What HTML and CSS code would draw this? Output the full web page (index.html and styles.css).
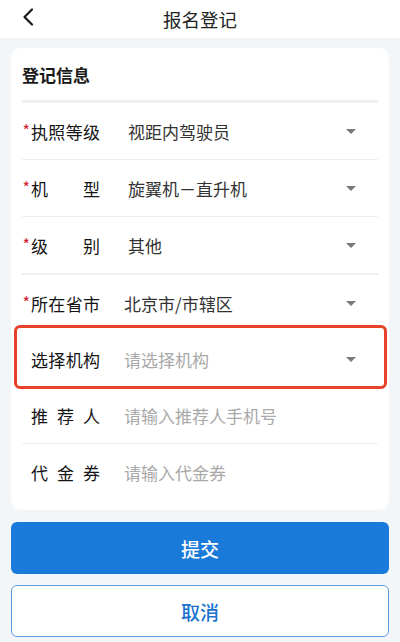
FILE: index.html
```html
<!DOCTYPE html>
<html lang="zh-CN">
<head>
<meta charset="utf-8">
<title>报名登记</title>
<link rel="stylesheet" href="styles.css">
</head>
<body>
<header class="topbar">
  <svg class="back" width="12" height="18" viewBox="0 0 12 18"><path d="M10 1.5 L2.5 9 L10 16.5" fill="none" stroke="#1a1a1a" stroke-width="2.2" stroke-linecap="round" stroke-linejoin="round"/></svg>
  <h1 class="title">报名登记</h1>
</header>
<main class="page">
  <section class="card">
    <h2 class="card-title">登记信息</h2>
    <div class="thick"></div>
    <div class="row line">
      <span class="star">*</span>
      <span class="label"><i>执</i><i>照</i><i>等</i><i>级</i></span>
      <span class="value v4">视距内驾驶员</span>
      <span class="caret"></span>
    </div>
    <div class="row line">
      <span class="star">*</span>
      <span class="label"><i>机</i><i>型</i></span>
      <span class="value v4">旋翼机－直升机</span>
      <span class="caret"></span>
    </div>
    <div class="row">
      <span class="star">*</span>
      <span class="label"><i>级</i><i>别</i></span>
      <span class="value v4">其他</span>
      <span class="caret"></span>
    </div>
    <div class="thick thin2"></div>
    <div class="row">
      <span class="star">*</span>
      <span class="label"><i>所</i><i>在</i><i>省</i><i>市</i></span>
      <span class="value">北京市/市辖区</span>
      <span class="caret"></span>
    </div>
    <div class="row marked">
      <span class="star"></span>
      <span class="label"><i>选</i><i>择</i><i>机</i><i>构</i></span>
      <span class="value ph">请选择机构</span>
      <span class="caret"></span>
    </div>
    <div class="row line">
      <span class="star"></span>
      <span class="label"><i>推</i><i>荐</i><i>人</i></span>
      <span class="value ph">请输入推荐人手机号</span>
    </div>
    <div class="row">
      <span class="star"></span>
      <span class="label"><i>代</i><i>金</i><i>券</i></span>
      <span class="value ph">请输入代金券</span>
    </div>
  </section>
  <button class="btn primary">提交</button>
  <button class="btn ghost">取消</button>
</main>
</body>
</html>
```

FILE: styles.css
```css
* { box-sizing: border-box; }
html, body {
  margin: 0;
  padding: 0;
}
body {
  width: 400px;
  height: 642px;
  overflow: hidden;
  background: #f3f6f9;
  font-family: "Noto Sans CJK SC", "Noto Sans", sans-serif;
  color: #1f1f1f;
}
.topbar {
  position: relative;
  height: 38px;
  background: #ffffff;
  display: flex;
  align-items: center;
  justify-content: center;
}
.back {
  position: absolute;
  left: 22px;
  top: 8px;
}
.title {
  margin: 0;
  font-size: 18.5px;
  font-weight: 400;
  color: #222;
  line-height: 1;
}
.page {
  padding: 10px 11px 0;
  display: flex;
  flex-direction: column;
}
.card {
  background: #ffffff;
  border-radius: 10px;
  padding: 0 11px 10px 11px;
}
.card-title {
  margin: 0;
  height: 52px;
  display: flex;
  align-items: center;
  font-size: 17px;
  font-weight: 600;
  color: #1a1a1a;
  padding-top: 1px;
}
.thick {
  height: 3px;
  background: #eef1f4;
}
.thin2 { height: 2px; }
.row {
  position: relative;
  height: 56px;
  display: flex;
  align-items: center;
  font-size: 17px;
}
.row.line { height: 57px; border-bottom: 1px solid #eeeeee; }
.star {
  width: 9px;
  color: #d6182d;
  font-size: 16px;
  line-height: 1;
  margin-top: -3px;
  text-align: right;
  padding-right: 1px;
}
.label {
  width: 69px;
  display: flex;
  justify-content: space-between;
  color: #151515;
}
.label i { font-style: normal; }
.value {
  margin-left: 24px;
  flex: 1;
  color: #333333;
}
.value.v4 { margin-left: 28px; }
.value.ph { color: #a9a9a9; }
.caret {
  width: 0;
  height: 0;
  border-left: 5px solid transparent;
  border-right: 5px solid transparent;
  border-top: 5px solid #7a7a7a;
  margin-right: 22px;
}
.marked::after {
  content: "";
  position: absolute;
  left: -8px;
  right: -9px;
  top: -6px;
  bottom: -2px;
  border: 3.5px solid #e8432a;
  border-radius: 6px;
}
.btn {
  display: block;
  width: 100%;
  font-family: "Noto Sans CJK SC", sans-serif;
  font-size: 19px;
  font-weight: 500;
  border-radius: 6px;
  cursor: pointer;
}
.primary {
  margin-top: 12px;
  height: 52px;
  background: #1a7ad9;
  color: #ffffff;
  border: none;
}
.ghost {
  margin-top: 11px;
  height: 52px;
  background: #ffffff;
  color: #1a72cf;
  border: 1.5px solid #5d9ade;
}
```
